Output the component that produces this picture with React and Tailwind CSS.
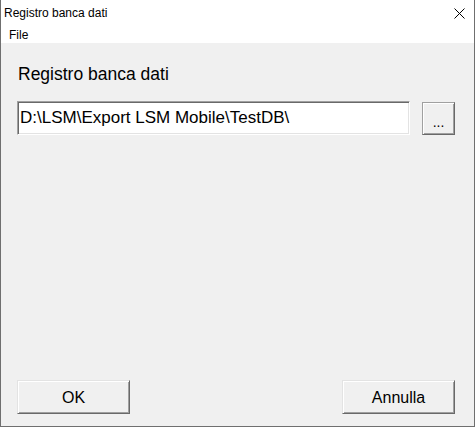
import React from "react";

export default function App() {
  const font = { fontFamily: '"Liberation Sans", Arial, sans-serif' };

  return (
    <div
      className="w-[475px] h-[427px] flex flex-col bg-[#f0f0f0] border-x border-b border-[#6f6f6f] text-black"
      style={font}
    >
      {/* TITLE BAR */}
      <div className="h-[27px] flex items-center justify-between bg-white pl-[3px] pr-[9px]">
        <span className="text-[12px] leading-[14px] pb-[1px]">Registro banca dati</span>
        <svg width="11" height="11" viewBox="0 0 11 11">
          <path d="M0.5 0.5 L10.5 10.5 M10.5 0.5 L0.5 10.5" stroke="#000" strokeWidth="1" />
        </svg>
      </div>

      {/* MENU */}
      <div className="h-[16px] flex items-center bg-white pl-[8px]">
        <span className="text-[12px] leading-[14px]">File</span>
      </div>

      {/* CONTENT */}
      <div className="flex-1 flex flex-col pl-[16px] pr-[19px] pt-[21px] pb-[12px]">
        <div className="text-[17.5px] leading-[20px] pl-[1px]">Registro banca dati</div>

        <div className="flex items-center gap-[12px] mt-[17px]">
          <div className="w-[393px] h-[34px] flex items-center bg-white border-t border-l border-[#a0a0a0] border-b-white border-r-white border-b border-r shadow-[inset_1px_1px_0_#696969,inset_-1px_-1px_0_#e3e3e3] pl-[2px]">
            <span className="text-[17px] leading-[20px]">D:\LSM\Export LSM Mobile\TestDB\</span>
          </div>
          <button className="w-[33px] h-[33px] flex items-center justify-center bg-[#f0f0f0] border border-[#a0a0a0] border-b-[#696969] border-r-[#696969] shadow-[inset_1px_1px_0_#ffffff,inset_-1px_-1px_0_#a0a0a0] text-[14px] leading-none pt-[8px]">
            ...
          </button>
        </div>

        <div className="mt-auto flex justify-between">
          <button className="w-[113px] h-[34px] flex items-center justify-center bg-[#f0f0f0] border border-[#e3e3e3] border-b-[#696969] border-r-[#696969] shadow-[inset_1px_1px_0_#ffffff,inset_-1px_-1px_0_#a0a0a0] text-[16px] leading-[18px] pt-[1px]">
            OK
          </button>
          <button className="w-[113px] h-[34px] flex items-center justify-center bg-[#f0f0f0] border border-[#e3e3e3] border-b-[#696969] border-r-[#696969] shadow-[inset_1px_1px_0_#ffffff,inset_-1px_-1px_0_#a0a0a0] text-[16px] leading-[18px] pt-[1px]">
            Annulla
          </button>
        </div>
      </div>
    </div>
  );
}
